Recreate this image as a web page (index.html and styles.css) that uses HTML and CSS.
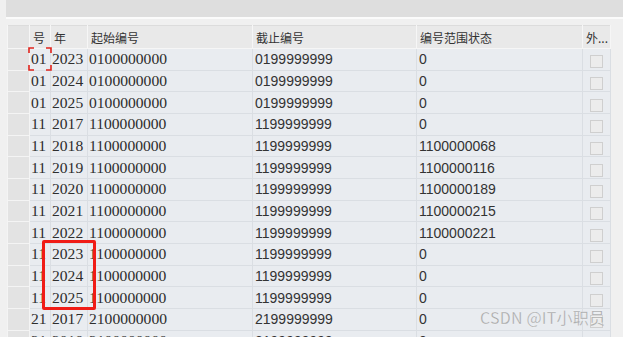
FILE: index.html
```html
<!DOCTYPE html>
<html lang="zh-CN">
<head>
<meta charset="utf-8">
<link rel="stylesheet" href="styles.css">
</head>
<body>
<div class="page">
  <div class="toolbar"></div>
  <div class="sep"></div>
  <div class="content">
    <table class="grid">
      <colgroup>
        <col class="c-sel"><col class="c-no"><col class="c-yr"><col class="c-from"><col class="c-to"><col class="c-st"><col class="c-ext">
      </colgroup>
      <thead>
        <tr><th class="sel"></th><th>号</th><th>年</th><th>起始编号</th><th>截止编号</th><th>编号范围状态</th><th>外...</th></tr>
      </thead>
      <tbody id="rows"></tbody>
    </table>
    <svg class="focus" width="24" height="24" viewBox="0 0 24 24"><path d="M1 6V1h5M18 1h5v5M23 18v5h-5M6 23H1v-5" fill="none" stroke="#e0241c" stroke-width="1.6"/></svg>
    <div class="mark"></div>
    <div class="watermark">CSDN @IT小职员</div>
  </div>
</div>
<script>
const data = [
  ["01","2023","0100000000","0199999999","0"],
  ["01","2024","0100000000","0199999999","0"],
  ["01","2025","0100000000","0199999999","0"],
  ["11","2017","1100000000","1199999999","0"],
  ["11","2018","1100000000","1199999999","1100000068"],
  ["11","2019","1100000000","1199999999","1100000116"],
  ["11","2020","1100000000","1199999999","1100000189"],
  ["11","2021","1100000000","1199999999","1100000215"],
  ["11","2022","1100000000","1199999999","1100000221"],
  ["11","2023","1100000000","1199999999","0"],
  ["11","2024","1100000000","1199999999","0"],
  ["11","2025","1100000000","1199999999","0"],
  ["21","2017","2100000000","2199999999","0"],
  ["21","2018","2100000000","2199999999","0"]
];
const tb = document.getElementById("rows");
tb.innerHTML = data.map(r =>
  '<tr><td class="sel"></td><td class="serif">'+r[0]+'</td><td class="serif">'+r[1]+'</td><td class="serif">'+r[2]+'</td><td class="sans">'+r[3]+'</td><td class="sans">'+r[4]+'</td><td class="ext"><span class="box"></span></td></tr>'
).join("");
</script>
</body>
</html>
```
FILE: styles.css
```css
html, body {
  margin: 0;
  padding: 0;
  background: #f0f0f0;
  overflow: hidden;
}
.page {
  width: 623px;
  height: 337px;
  padding-left: 6px;
  box-sizing: border-box;
  display: flex;
  flex-direction: column;
}
.toolbar {
  height: 17px;
  background: #dedede;
  flex: none;
}
.sep {
  height: 2px;
  background: #fbfbfb;
  flex: none;
  margin-bottom: 6px;
}
.content {
  position: relative;
  padding-left: 1px;
  flex: 1;
}
.grid {
  border-collapse: collapse;
  table-layout: fixed;
  width: 603px;
  font-family: "Noto Sans CJK SC", "Noto Sans", sans-serif;
  color: #333;
  border-top: 1px solid #dcdcdc;
}
.c-sel { width: 22px; }
.c-no { width: 21px; }
.c-yr { width: 37px; }
.c-from { width: 165px; }
.c-to { width: 164px; }
.c-st { width: 166px; }
.c-ext { width: 28px; }
th {
  height: 21px;
  padding: 1px 0 0 3px;
  background: #e9e9e9;
  border: 1px solid #f6f6f6;
  border-top: none;
  font-weight: normal;
  font-size: 12px;
  text-align: left;
  white-space: nowrap;
  overflow: hidden;
  color: #333;
}
th.sel { background: #e4e4e4; }
td {
  height: 20.67px;
  padding: 0 0 0 2px;
  background: #e9ecf0;
  border: 1px solid #dadee3;
  white-space: nowrap;
  overflow: hidden;
  line-height: 18px;
}
td.sel {
  background: #e3e3e3;
  border-color: #f4f4f4;
}
td.serif {
  font-family: "Liberation Serif", serif;
  font-size: 15.6px;
  color: #2e2e2e;
  padding-left: 1px;
}
td.sans {
  font-family: "Liberation Sans", sans-serif;
  font-size: 14px;
  color: #333;
}
td.ext {
  padding: 0;
  text-align: center;
}
.box {
  display: inline-block;
  width: 11px;
  height: 11px;
  border: 1px solid #cfcfcf;
  background: #ececec;
  vertical-align: middle;
}
.focus {
  position: absolute;
  left: 22px;
  top: 22px;
}
.mark {
  position: absolute;
  left: 36px;
  top: 215px;
  width: 48px;
  height: 64px;
  border: 3px solid #f01c16;
  border-radius: 2px;
}
.watermark {
  position: absolute;
  left: 474px;
  top: 280px;
  font-family: "Noto Sans CJK SC", "Noto Sans", sans-serif;
  font-size: 16px;
  color: rgba(150, 150, 150, 0.75);
  -webkit-text-stroke: 0.3px rgba(255,255,255,0.6);
  letter-spacing: 0.2px;
}
```
